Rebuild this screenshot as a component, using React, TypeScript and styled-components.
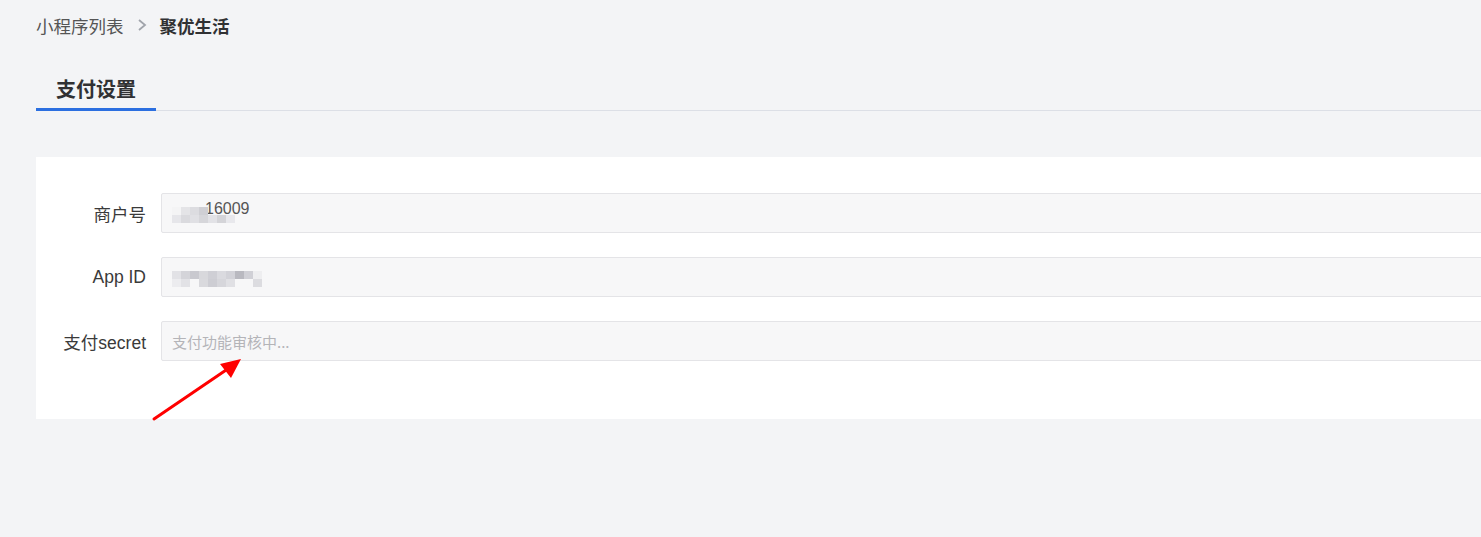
import React from 'react';
import styled, { createGlobalStyle } from 'styled-components';

const GlobalStyle = createGlobalStyle`
  html, body {
    margin: 0;
    padding: 0;
    background: #f3f4f6;
    overflow: hidden;
  }
  body {
    font-family: "Noto Sans CJK SC", "Liberation Sans", sans-serif;
  }
`;

type Field = {
  label: string;
  value?: string;
  placeholder?: string;
  mosaic?: string[][];
};

const merchantMosaic = [
  ['#f4f4f5', '#e4e4e7', '#dcdce0', '#cfcfd4', '', '', '', ''],
  ['#e6e6ea', '#dadade', '#e0e0e4', '#d6d6da', '#e2e2e6', '#d4d4d8', '#e8e8ec', ''],
];

const appIdMosaic = [
  ['#e2e2e6', '#d4d4d9', '#c9c9cf', '#d8d8dc', '#cfcfd5', '#dadadf', '#d2d2d8', '#b9b9c0', '#d0d0d6', '#eeeef0'],
  ['#ececef', '#e2e2e6', '', '#d9d9dd', '#cdcdd3', '#d6d6db', '#e0e0e4', '', '', '#dcdce0'],
];

const fields: Field[] = [
  { label: '商户号', value: '16009', mosaic: merchantMosaic },
  { label: 'App ID', mosaic: appIdMosaic },
  { label: '支付secret', placeholder: '支付功能审核中...' },
];

export default function App(): JSX.Element {
  return (
    <Page>
      <GlobalStyle />
      <Breadcrumb>
        <Crumb>小程序列表</Crumb>
        <Chevron viewBox="0 0 12 16">
          <path d="M3 3 L9 8 L3 13" fill="none" stroke="#a0a4ab" strokeWidth="1.8" />
        </Chevron>
        <Crumb current>聚优生活</Crumb>
      </Breadcrumb>
      <Tabs>
        <Tab active>支付设置</Tab>
      </Tabs>
      <Card>
        {fields.map((f) => (
          <Row key={f.label}>
            <Label>{f.label}</Label>
            <InputBox>
              {f.mosaic && (
                <Mosaic>
                  {f.mosaic.map((line, i) => (
                    <MosaicLine key={i}>
                      {line.map((c, j) => (
                        <Cell key={j} color={c} />
                      ))}
                    </MosaicLine>
                  ))}
                </Mosaic>
              )}
              {f.value && <Value>{f.value}</Value>}
              {f.placeholder && <Placeholder>{f.placeholder}</Placeholder>}
            </InputBox>
          </Row>
        ))}
        <Arrow width="100" height="70" viewBox="0 0 100 70">
          <line x1="4" y1="66" x2="82" y2="13" stroke="#ff0000" strokeWidth="3" strokeLinecap="round" />
          <polygon points="91,6 70,11 81,25" fill="#ff0000" />
        </Arrow>
      </Card>
    </Page>
  );
}

const Page = styled.div`
  width: 1600px;
  min-height: 537px;
  padding: 0 0 0 36px;
  box-sizing: border-box;
`;

const Breadcrumb = styled.div`
  display: flex;
  align-items: center;
  height: 50px;
  gap: 10px;
`;

const Crumb = styled.span<{ current?: boolean }>`
  font-size: 17.5px;
  color: ${(p) => (p.current ? '#303133' : '#555')};
  font-weight: ${(p) => (p.current ? 700 : 400)};
`;

const Chevron = styled.svg`
  width: 12px;
  height: 16px;
  margin: 0 2px;
`;

const Tabs = styled.div`
  margin-top: 17px;
  display: flex;
  border-bottom: 1px solid #dcdfe6;
  height: 44px;
  box-sizing: border-box;
`;

const Tab = styled.div<{ active?: boolean }>`
  width: 120px;
  text-align: center;
  font-size: 20px;
  font-weight: 700;
  color: #303133;
  line-height: 44px;
  height: 44px;
  box-sizing: border-box;
  border-bottom: 3px solid ${(p) => (p.active ? '#2b6fe0' : 'transparent')};
  margin-bottom: -1px;
`;

const Card = styled.div`
  position: relative;
  margin-top: 46px;
  background: #ffffff;
  padding: 36px 0 58px 0;
  display: flex;
  flex-direction: column;
  gap: 24px;
`;

const Row = styled.div`
  display: flex;
  align-items: center;
`;

const Label = styled.div`
  width: 110px;
  text-align: right;
  padding-right: 15px;
  font-size: 17.5px;
  color: #3a3a3a;
  font-family: "Liberation Sans", "Noto Sans CJK SC", sans-serif;
`;

const InputBox = styled.div`
  flex: 1;
  height: 40px;
  box-sizing: border-box;
  border: 1px solid #e4e4e7;
  border-radius: 2px;
  background: #f7f7f8;
  display: flex;
  align-items: center;
  padding-left: 10px;
  position: relative;
`;

const Mosaic = styled.div`
  display: flex;
  flex-direction: column;
  position: relative;
  z-index: 1;
  margin-top: 4px;
`;

const MosaicLine = styled.div`
  display: flex;
`;

const Cell = styled.div<{ color: string }>`
  width: 9px;
  height: 8px;
  background: ${(p) => p.color || 'transparent'};
`;

const Value = styled.span`
  position: absolute;
  left: 43px;
  top: 6px;
  font-size: 16px;
  color: #555;
  font-family: "Liberation Sans", sans-serif;
`;

const Placeholder = styled.span`
  font-size: 15px;
  color: #b4b4b8;
`;

const Arrow = styled.svg`
  position: absolute;
  left: 114px;
  top: 196px;
`;
